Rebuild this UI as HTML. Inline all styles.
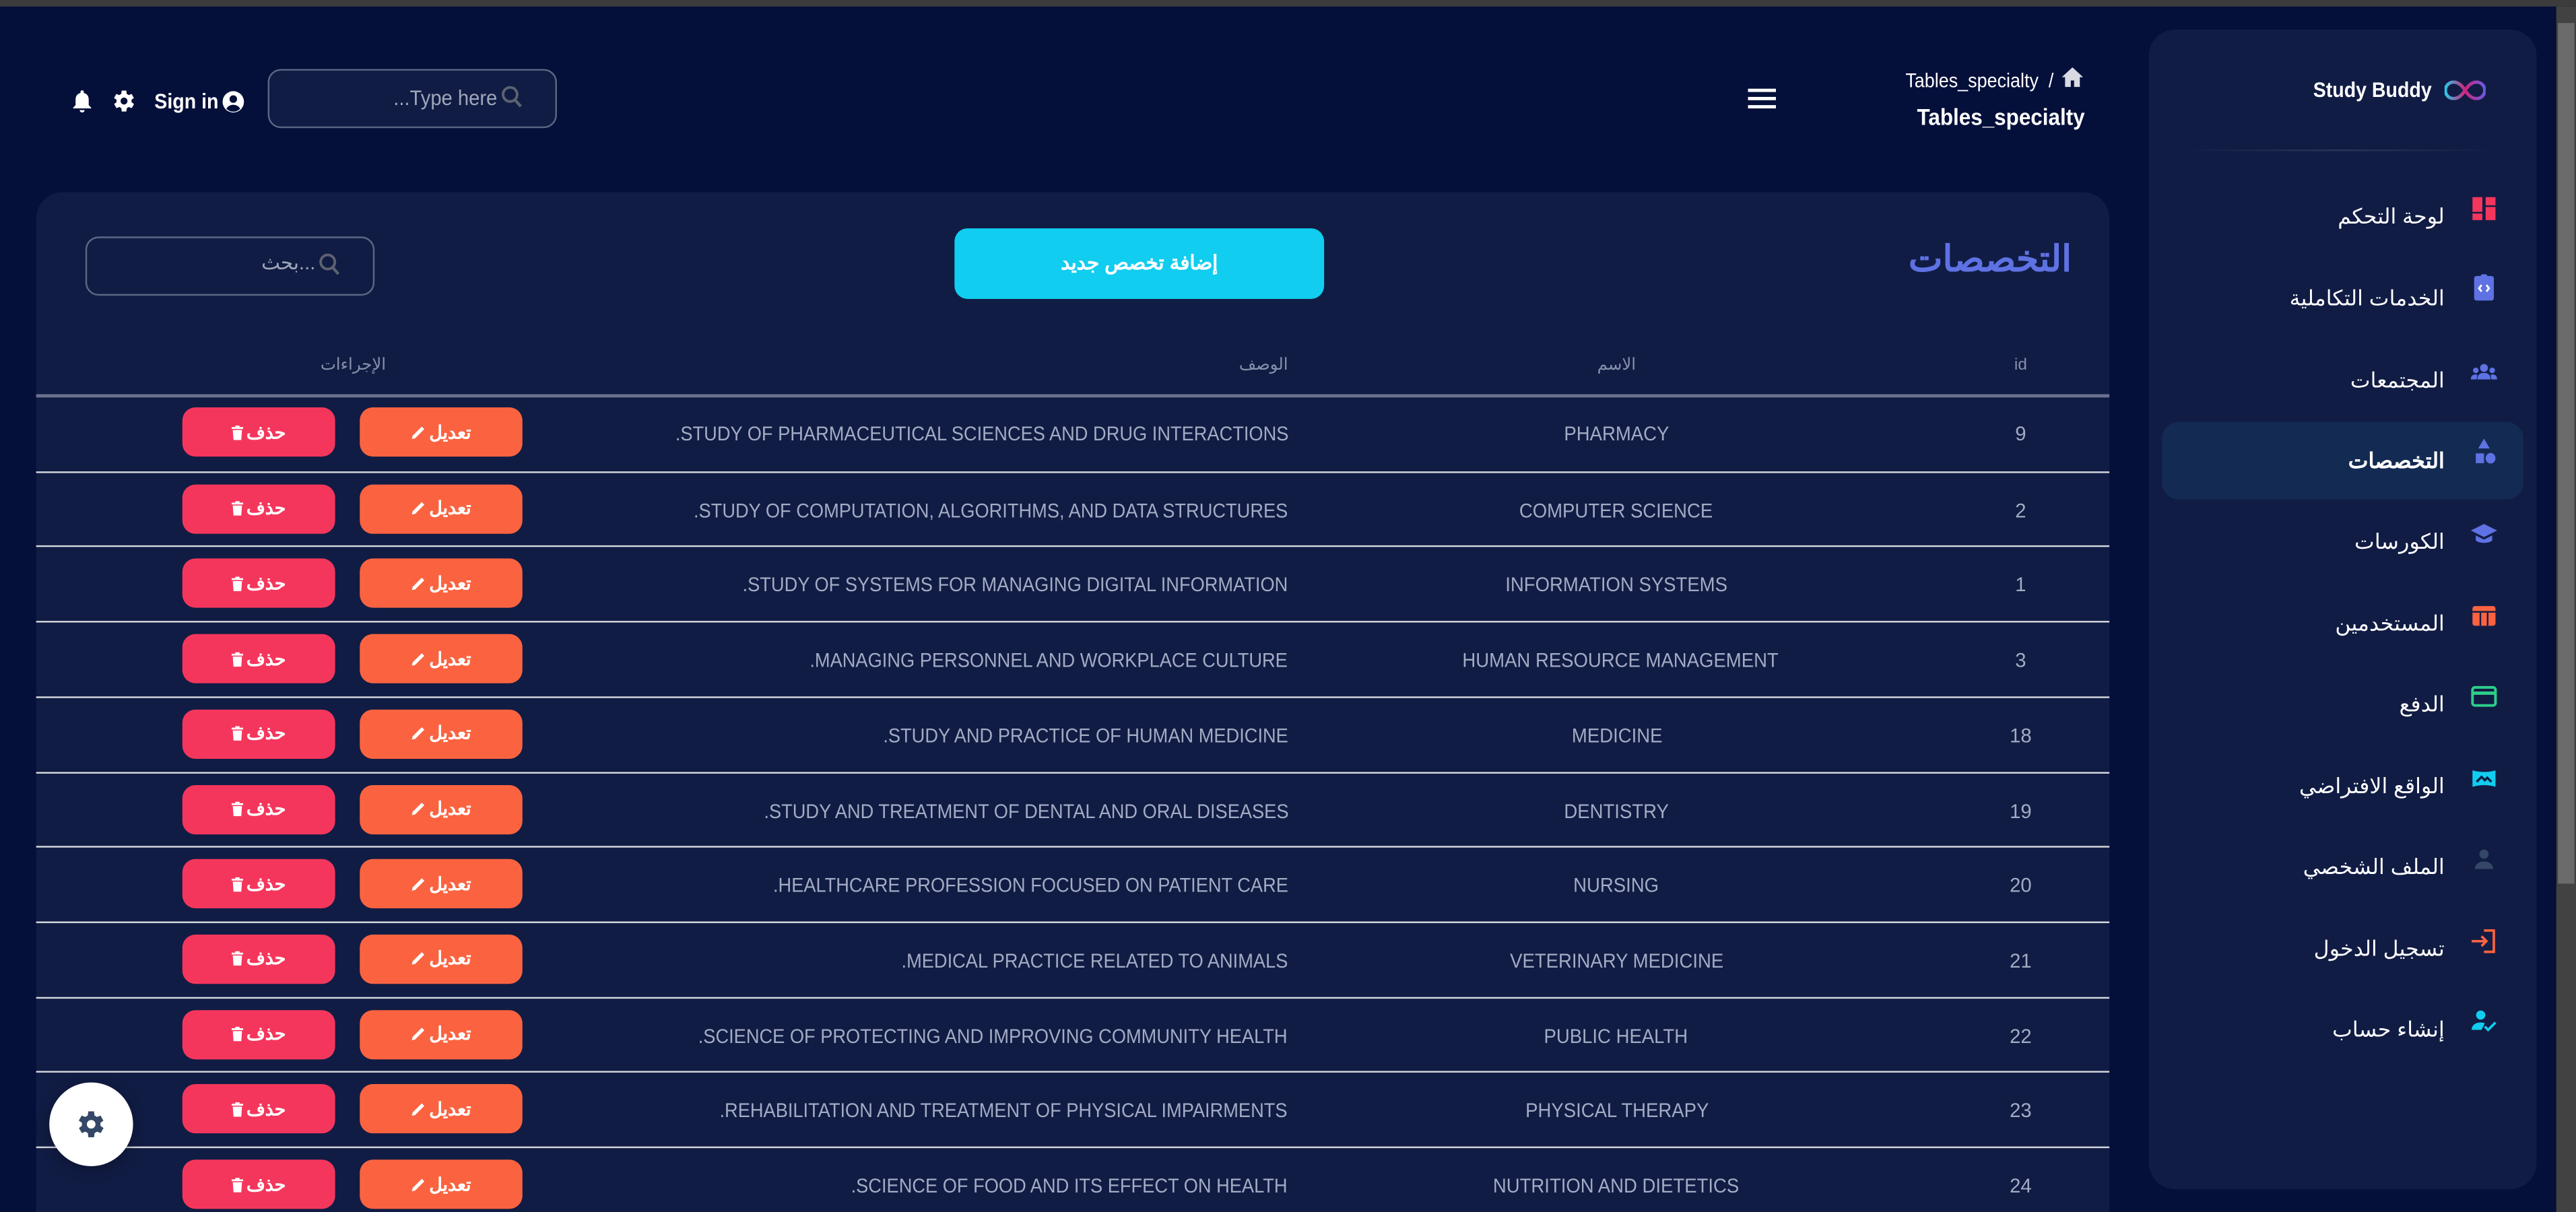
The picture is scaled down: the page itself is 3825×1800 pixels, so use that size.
<!DOCTYPE html>
<html><head><meta charset="utf-8">
<style>
html,body{margin:0;padding:0;width:3825px;height:1800px;overflow:hidden;background:#040f3a;}
#s{position:absolute;left:0;top:0;width:1568px;height:738px;transform:scale(2.4394);transform-origin:0 0;background:#040f3a;font-family:"Liberation Sans",sans-serif;color:#fff;overflow:hidden;}
.a{position:absolute;}
.sq{display:inline-block;transform:scaleX(.84);transform-origin:right center;white-space:nowrap;}
.row{position:absolute;left:22px;width:1262px;height:45.7px;border-top:1px solid #d6d8de;}
.id,.nm,.ds{position:absolute;top:16px;font-size:12px;color:#a3abc4;white-space:nowrap;}
.id{left:1180px;width:56px;text-align:center;}
.nm{left:862px;width:200px;text-align:center;}
.ds{right:500px;text-align:right;}
.ds span{display:inline-block;transform:scaleX(.93);transform-origin:right center;}
.nm span{display:inline-block;transform:scaleX(.94);}
.be,.bd{position:absolute;top:7px;height:30px;border-radius:8px;font-size:11px;font-weight:bold;display:flex;align-items:center;justify-content:center;gap:2px;}
.be{left:197px;width:99px;background:#fb6340;}
.bd{left:89px;width:93px;background:#f5365c;}
.nav{position:absolute;right:80px;font-size:13px;color:#fff;white-space:nowrap;text-align:right;}
.ic{position:absolute;left:1503px;width:18px;height:18px;}
</style></head><body><div id="s">
<div class="a" style="left:0;top:0;width:1568px;height:4px;background:#3c3c3c"></div>
<div class="a" style="left:1556px;top:4px;width:12px;height:734px;background:#424242"></div>
<div class="a" style="left:1557px;top:14px;width:10px;height:524px;background:#6b6b6b"></div>

<div class="a" style="left:1100px;top:42px;width:150px;text-align:right;font-size:12px;white-space:nowrap"><span class="sq" style="transform:scaleX(.92)">Tables_specialty &nbsp;/</span></div>
<svg class="a" style="left:1255px;top:41px" width="13" height="12" viewBox="0 0 13 12"><path d="M6.5 0L0 6h2v6h3.5V8h2v4H11V6h2z" fill="#d8dbe4"/></svg>
<div class="a" style="left:1100px;top:63px;width:169px;text-align:right;font-size:14px;font-weight:bold;white-space:nowrap"><span class="sq" style="transform:scaleX(.92)">Tables_specialty</span></div>
<div class="a" style="left:1064px;top:54px;width:17px;height:2px;background:#fff;box-shadow:0 5px 0 #fff,0 10px 0 #fff"></div>

<svg class="a" style="left:44px;top:55px" width="12" height="14" viewBox="0 0 12 14"><path d="M6 0c.6 0 1 .4 1 1v.6C9 2 10 3.6 10 5.6V9l1.5 1.6V11H.5v-.4L2 9V5.6C2 3.6 3 2 5 1.6V1c0-.6.4-1 1-1zM4.5 12h3a1.5 1.5 0 01-3 0z" fill="#fff"/></svg>
<svg class="a" style="left:67px;top:53px" width="17" height="17" viewBox="0 0 24 24"><path fill="#fff" fill-rule="evenodd" d="M19.4 13a7.5 7.5 0 000-2l2.1-1.6-2-3.5-2.5 1a7.3 7.3 0 00-1.7-1L15 3h-4l-.4 2.9a7.3 7.3 0 00-1.7 1l-2.5-1-2 3.5L6.6 11a7.5 7.5 0 000 2l-2.1 1.6 2 3.5 2.5-1c.5.4 1.1.7 1.7 1L11 21h4l.4-2.9c.6-.3 1.2-.6 1.7-1l2.5 1 2-3.5zM13 15a3 3 0 110-6 3 3 0 010 6z" transform="translate(-1 0)"/></svg>
<div class="a" style="left:94px;top:54px;font-size:13px;font-weight:bold"><span class="sq" style="transform-origin:left center;transform:scaleX(.9)">Sign in</span></div>
<svg class="a" style="left:135px;top:55px" width="14" height="14" viewBox="0 0 14 14"><circle cx="7" cy="7" r="6.5" fill="#fff"/><circle cx="7" cy="5.3" r="2.3" fill="#040f3a"/><path d="M2.8 11.2c.9-1.6 2.4-2.4 4.2-2.4s3.3.8 4.2 2.4A6 6 0 017 13a6 6 0 01-4.2-1.8z" fill="#040f3a"/></svg>
<div class="a" style="left:163px;top:42px;width:174px;height:34px;border:1px solid #5e6684;border-radius:8px;background:#111c44"></div>
<div class="a" style="left:200px;top:52px;width:103px;text-align:right;font-size:13px;color:#a0a6ba;white-space:nowrap"><span class="sq" style="transform:scaleX(.92)">...Type here</span></div>
<svg class="a" style="left:305px;top:52px" width="13" height="14" viewBox="0 0 13 14"><circle cx="5.5" cy="5.5" r="4.3" fill="none" stroke="#5d6170" stroke-width="1.6"/><path d="M8.5 8.8l3.5 4" stroke="#5d6170" stroke-width="1.8"/></svg>

<div class="a" style="left:22px;top:117px;width:1262px;height:640px;background:#111c44;border-radius:16px"></div>
<div class="a" style="left:1100px;top:145px;width:161px;text-align:right;font-size:22px;color:#5e72e4;font-weight:bold;white-space:nowrap">التخصصات</div>
<div class="a" style="left:581px;top:139px;width:225px;height:43px;background:#11cdef;border-radius:8px;text-align:center;line-height:43px;font-size:12px;font-weight:bold">إضافة تخصص جديد</div>
<div class="a" style="left:52px;top:144px;width:174px;height:34px;border:1px solid #5e6684;border-radius:8px"></div>
<div class="a" style="left:120px;top:153px;width:72px;text-align:right;font-size:12px;color:#a0a6ba">بحث...</div>
<svg class="a" style="left:194px;top:154px" width="13" height="14" viewBox="0 0 13 14"><circle cx="5.5" cy="5.5" r="4.3" fill="none" stroke="#5d6170" stroke-width="1.6"/><path d="M8.5 8.8l3.5 4" stroke="#5d6170" stroke-width="1.8"/></svg>

<div class="a" style="left:1200px;top:217px;width:60px;text-align:center;font-size:10px;color:#8790ab">id</div>
<div class="a" style="left:950px;top:217px;width:68px;text-align:center;font-size:10px;color:#8790ab">الاسم</div>
<div class="a" style="left:700px;top:217px;width:84px;text-align:right;font-size:10px;color:#8790ab">الوصف</div>
<div class="a" style="left:180px;top:217px;width:70px;text-align:center;font-size:10px;color:#8790ab">الإجراءات</div>
<div class="a" style="left:22px;top:240px;width:1262px;height:1.5px;background:#6b7290"></div>

<svg width="0" height="0" style="position:absolute"><defs>
<symbol id="pen" viewBox="0 0 10 10"><path d="M7.5 0.8l1.7 1.7L3 8.7 0.8 9.2 1.3 7z" fill="#fff"/></symbol>
<symbol id="trash" viewBox="0 0 8 10"><rect x="0" y="1" width="8" height="1.3" fill="#fff"/><rect x="2.5" y="0" width="3" height="1.2" fill="#fff"/><path d="M0.8 3h6.4l-.5 7H1.3z" fill="#fff"/></symbol>
</defs></svg>

<div class="row" style="top:241px;border-top:none"><div class="id">9</div><div class="nm"><span>PHARMACY</span></div><div class="ds"><span>.STUDY OF PHARMACEUTICAL SCIENCES AND DRUG INTERACTIONS</span></div><div class="be"><svg width="9" height="9"><use href="#pen"/></svg>تعديل</div><div class="bd"><svg width="7" height="9"><use href="#trash"/></svg>حذف</div></div>
<div class="row" style="top:286.7px"><div class="id">2</div><div class="nm"><span>COMPUTER SCIENCE</span></div><div class="ds"><span>.STUDY OF COMPUTATION, ALGORITHMS, AND DATA STRUCTURES</span></div><div class="be"><svg width="9" height="9"><use href="#pen"/></svg>تعديل</div><div class="bd"><svg width="7" height="9"><use href="#trash"/></svg>حذف</div></div>
<div class="row" style="top:332.4px"><div class="id">1</div><div class="nm"><span>INFORMATION SYSTEMS</span></div><div class="ds"><span>.STUDY OF SYSTEMS FOR MANAGING DIGITAL INFORMATION</span></div><div class="be"><svg width="9" height="9"><use href="#pen"/></svg>تعديل</div><div class="bd"><svg width="7" height="9"><use href="#trash"/></svg>حذف</div></div>
<div class="row" style="top:378.1px"><div class="id">3</div><div class="nm"><span>HUMAN RESOURCE MANAGEMENT</span></div><div class="ds"><span>.MANAGING PERSONNEL AND WORKPLACE CULTURE</span></div><div class="be"><svg width="9" height="9"><use href="#pen"/></svg>تعديل</div><div class="bd"><svg width="7" height="9"><use href="#trash"/></svg>حذف</div></div>
<div class="row" style="top:423.8px"><div class="id">18</div><div class="nm"><span>MEDICINE</span></div><div class="ds"><span>.STUDY AND PRACTICE OF HUMAN MEDICINE</span></div><div class="be"><svg width="9" height="9"><use href="#pen"/></svg>تعديل</div><div class="bd"><svg width="7" height="9"><use href="#trash"/></svg>حذف</div></div>
<div class="row" style="top:469.5px"><div class="id">19</div><div class="nm"><span>DENTISTRY</span></div><div class="ds"><span>.STUDY AND TREATMENT OF DENTAL AND ORAL DISEASES</span></div><div class="be"><svg width="9" height="9"><use href="#pen"/></svg>تعديل</div><div class="bd"><svg width="7" height="9"><use href="#trash"/></svg>حذف</div></div>
<div class="row" style="top:515.2px"><div class="id">20</div><div class="nm"><span>NURSING</span></div><div class="ds"><span>.HEALTHCARE PROFESSION FOCUSED ON PATIENT CARE</span></div><div class="be"><svg width="9" height="9"><use href="#pen"/></svg>تعديل</div><div class="bd"><svg width="7" height="9"><use href="#trash"/></svg>حذف</div></div>
<div class="row" style="top:560.9px"><div class="id">21</div><div class="nm"><span>VETERINARY MEDICINE</span></div><div class="ds"><span>.MEDICAL PRACTICE RELATED TO ANIMALS</span></div><div class="be"><svg width="9" height="9"><use href="#pen"/></svg>تعديل</div><div class="bd"><svg width="7" height="9"><use href="#trash"/></svg>حذف</div></div>
<div class="row" style="top:606.6px"><div class="id">22</div><div class="nm"><span>PUBLIC HEALTH</span></div><div class="ds"><span>.SCIENCE OF PROTECTING AND IMPROVING COMMUNITY HEALTH</span></div><div class="be"><svg width="9" height="9"><use href="#pen"/></svg>تعديل</div><div class="bd"><svg width="7" height="9"><use href="#trash"/></svg>حذف</div></div>
<div class="row" style="top:652.3px"><div class="id">23</div><div class="nm"><span>PHYSICAL THERAPY</span></div><div class="ds"><span>.REHABILITATION AND TREATMENT OF PHYSICAL IMPAIRMENTS</span></div><div class="be"><svg width="9" height="9"><use href="#pen"/></svg>تعديل</div><div class="bd"><svg width="7" height="9"><use href="#trash"/></svg>حذف</div></div>
<div class="row" style="top:698px"><div class="id">24</div><div class="nm"><span>NUTRITION AND DIETETICS</span></div><div class="ds"><span>.SCIENCE OF FOOD AND ITS EFFECT ON HEALTH</span></div><div class="be"><svg width="9" height="9"><use href="#pen"/></svg>تعديل</div><div class="bd"><svg width="7" height="9"><use href="#trash"/></svg>حذف</div></div>

<div class="a" style="left:30px;top:659px;width:51px;height:51px;border-radius:50%;background:#fff;box-shadow:0 2px 8px rgba(0,0,0,.3)"></div>
<svg class="a" style="left:45px;top:674px" width="21" height="21" viewBox="0 0 24 24"><path fill="#344767" fill-rule="evenodd" d="M19.4 13a7.5 7.5 0 000-2l2.1-1.6-2-3.5-2.5 1a7.3 7.3 0 00-1.7-1L15 3h-4l-.4 2.9a7.3 7.3 0 00-1.7 1l-2.5-1-2 3.5L6.6 11a7.5 7.5 0 000 2l-2.1 1.6 2 3.5 2.5-1c.5.4 1.1.7 1.7 1L11 21h4l.4-2.9c.6-.3 1.2-.6 1.7-1l2.5 1 2-3.5zM13 15a3 3 0 110-6 3 3 0 010 6z" transform="translate(-1 0)"/></svg>

<div class="a" style="left:1308px;top:18px;width:236px;height:706px;background:#111c44;border-radius:16px"></div>
<div class="a" style="left:1380px;top:47px;width:100px;text-align:right;font-size:13px;font-weight:bold;white-space:nowrap"><span class="sq" style="transform:scaleX(.9)">Study Buddy</span></div>
<svg class="a" style="left:1488px;top:49px" width="25" height="12" viewBox="0 0 25 12"><defs><linearGradient id="g" x1="0" x2="1"><stop offset="0" stop-color="#2dc5e8"/><stop offset=".5" stop-color="#d0237d"/><stop offset="1" stop-color="#6a5be0"/></linearGradient></defs><path d="M12.5 6C10 2 7.5 1 5.5 1a5 5 0 000 10c2 0 4.5-1 7-5s5-5 7-5a5 5 0 010 10c-2 0-4.5-1-7-5z" fill="none" stroke="url(#g)" stroke-width="2"/></svg>
<div class="a" style="left:1330px;top:91px;width:190px;height:1px;background:linear-gradient(90deg,transparent,#2c365c,transparent)"></div>

<div class="a" style="left:1316px;top:257px;width:220px;height:47px;background:#132a52;border-radius:10px"></div>

<div class="nav" style="top:124px">لوحة التحكم</div>
<div class="nav" style="top:174px">الخدمات التكاملية</div>
<div class="nav" style="top:224px">المجتمعات</div>
<div class="nav" style="top:273px;font-weight:bold">التخصصات</div>
<div class="nav" style="top:322px">الكورسات</div>
<div class="nav" style="top:372px">المستخدمين</div>
<div class="nav" style="top:421px">الدفع</div>
<div class="nav" style="top:471px">الواقع الافتراضي</div>
<div class="nav" style="top:520px">الملف الشخصي</div>
<div class="nav" style="top:570px">تسجيل الدخول</div>
<div class="nav" style="top:619px">إنشاء حساب</div>

<svg class="ic" style="top:118px" viewBox="0 0 18 18"><rect x="2" y="2" width="6" height="9" fill="#f5365c"/><rect x="10" y="2" width="6" height="5" fill="#f5365c"/><rect x="2" y="12" width="6" height="4" fill="#f5365c"/><rect x="10" y="8" width="6" height="8" fill="#f5365c"/></svg>
<svg class="ic" style="top:166px" viewBox="0 0 18 18"><rect x="3" y="2" width="12" height="15" rx="1.5" fill="#5e72e4"/><rect x="7" y="1" width="4" height="3" rx="1" fill="#5e72e4"/><path d="M7.5 7.5L6 9.5l1.5 2M10.5 7.5L12 9.5l-1.5 2" stroke="#fff" stroke-width="1.2" fill="none"/></svg>
<svg class="ic" style="top:218px" viewBox="0 0 18 18"><circle cx="9" cy="6" r="2.4" fill="#5e72e4"/><circle cx="4" cy="7.5" r="1.7" fill="#5e72e4"/><circle cx="14" cy="7.5" r="1.7" fill="#5e72e4"/><path d="M5 13c0-3 1.8-4 4-4s4 1 4 4zM1 13c0-2 1-3 3-3l1 .3L4.5 13zM17 13c0-2-1-3-3-3l-1 .3.5 2.7z" fill="#5e72e4"/></svg>
<svg class="ic" style="top:266px" viewBox="0 0 18 18"><path d="M9 1l3.5 6h-7z" fill="#5e72e4"/><rect x="4" y="10" width="5" height="6" fill="#5e72e4"/><ellipse cx="13" cy="13" rx="3" ry="3.2" fill="#5e72e4"/></svg>
<svg class="ic" style="top:316px" viewBox="0 0 18 18"><path d="M9 3l8 4-8 4-8-4z" fill="#5e72e4"/><path d="M4 10v3c2 2 8 2 10 0v-3l-5 2.5z" fill="#5e72e4"/></svg>
<svg class="ic" style="top:366px" viewBox="0 0 18 18"><rect x="2" y="3" width="14" height="12" rx="1.5" fill="#fb6340"/><rect x="2" y="6" width="14" height="1" fill="#111c44"/><rect x="6.3" y="7" width="1" height="8" fill="#111c44"/><rect x="10.7" y="7" width="1" height="8" fill="#111c44"/></svg>
<svg class="ic" style="top:415px" viewBox="0 0 18 18"><rect x="2" y="3.5" width="14" height="11" rx="1.5" fill="none" stroke="#2dce89" stroke-width="1.6"/><rect x="2" y="6" width="14" height="2" fill="#2dce89"/></svg>
<svg class="ic" style="top:465px" viewBox="0 0 18 18"><path d="M2 4q7 2 14 0v10q-7-2-14 0z" fill="#11cdef"/><path d="M4.5 11l3-3 2 2 1.5-1.5 2.5 2.5" stroke="#111c44" stroke-width="1.4" fill="none"/></svg>
<svg class="ic" style="top:514px" viewBox="0 0 18 18"><circle cx="9" cy="6" r="2.8" fill="#344767"/><path d="M3.5 15c0-3 2.5-4.5 5.5-4.5s5.5 1.5 5.5 4.5z" fill="#344767"/></svg>
<svg class="ic" style="top:564px" viewBox="0 0 18 18"><path d="M9 2.5h6v13H9" fill="none" stroke="#fb6340" stroke-width="1.5"/><path d="M1.5 9h9M7.5 6l3 3-3 3" fill="none" stroke="#fb6340" stroke-width="1.5"/></svg>
<svg class="ic" style="top:613px" viewBox="0 0 18 18"><circle cx="7" cy="5" r="2.8" fill="#11cdef"/><path d="M1.5 14c0-3 2.5-4.5 5.5-4.5 1 0 1.8.2 2.5.5L7.5 14z" fill="#11cdef"/><path d="M9.5 12l2 2 4.5-4.5" stroke="#11cdef" stroke-width="1.5" fill="none"/></svg>
</div></body></html>
